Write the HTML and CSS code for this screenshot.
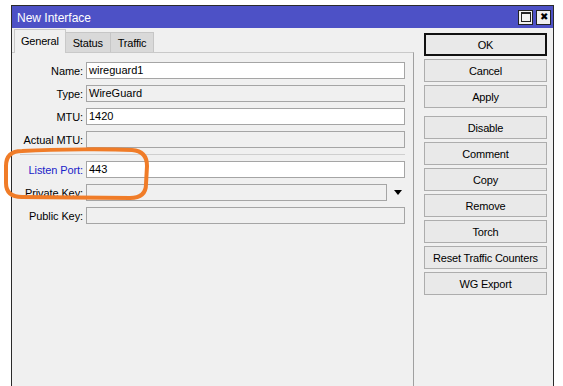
FILE: index.html
```html
<!DOCTYPE html>
<html lang="en">
<head>
  <meta charset="UTF-8">
  <title>New Interface</title>
  <link rel="stylesheet" href="styles.css">
</head>
<body>
  <div class="window">
    <div class="titlebar">
      <span class="title">New Interface</span>
      <span class="title-btn max"><span class="max-icon"></span></span>
      <span class="title-btn close">&#x2716;</span>
    </div>

    <div class="main">
      <div class="left">
        <div class="tabs">
          <div class="tab active">General</div>
          <div class="tab">Status</div>
          <div class="tab">Traffic</div>
        </div>

        <div class="panel">
          <div class="form">
            <label>Name:</label>
            <div class="field">wireguard1</div>

            <label>Type:</label>
            <div class="field disabled">WireGuard</div>

            <label>MTU:</label>
            <div class="field">1420</div>

            <label>Actual MTU:</label>
            <div class="field disabled"></div>

            <div class="separator"></div>

            <label class="blue">Listen Port:</label>
            <div class="field">443</div>

            <label>Private Key:</label>
            <div class="field-row">
              <div class="field disabled"></div>
              <span class="arrow"></span>
            </div>

            <label>Public Key:</label>
            <div class="field disabled"></div>
          </div>
        </div>
      </div>

      <div class="buttons">
        <button class="default">OK</button>
        <button>Cancel</button>
        <button class="spaced">Apply</button>
        <button>Disable</button>
        <button>Comment</button>
        <button>Copy</button>
        <button>Remove</button>
        <button>Torch</button>
        <button>Reset Traffic Counters</button>
        <button>WG Export</button>
      </div>
    </div>
  </div>

  <!-- marker drawn over the screenshot -->
  <svg class="marker" width="563" height="386" viewBox="0 0 563 386">
    <path d="M 22 151 C 60 149, 110 149, 132 150 Q 147 151, 147 166 L 146 184 Q 146 198, 130 198 L 22 197 Q 6 197, 6 183 L 6 166 Q 6 151, 22 151 Z"
          fill="none" stroke="#f07c28" stroke-width="4" />
  </svg>
</body>
</html>
```

FILE: styles.css
```css
body {
  margin: 0;
  height: 386px;
  background-color: white;
  font-family: 'Liberation Sans', Arial, sans-serif;
  font-size: 11px;
  color: black;
  overflow: hidden;
}

.window {
  margin: 5px 0 0 11px;
  width: 543px;
  height: 381px;
  box-sizing: border-box;
  border: 1px solid #2b2b2b;
  border-bottom: none;
  background-color: #f0f0f0;
  display: flex;
  flex-direction: column;
}

.titlebar {
  height: 22px;
  flex-shrink: 0;
  background-color: #4d51c6;
  display: flex;
  align-items: center;
  padding: 0 2px 0 5px;
}

.title {
  color: white;
  font-size: 12px;
  flex: 1;
  padding-top: 2px;
}

.title-btn {
  width: 13px;
  height: 13px;
  border: 1px solid #222;
  background-color: #f0f0f0;
  margin-left: 3px;
  display: flex;
  align-items: center;
  justify-content: center;
  font-size: 10px;
  line-height: 1;
}

.max-icon {
  width: 8px;
  height: 7px;
  border: 1px solid #222;
  border-top-width: 2px;
}

.main {
  display: flex;
  flex: 1;
}

.left {
  width: 402px;
  display: flex;
  flex-direction: column;
}

.tabs {
  height: 24px;
  display: flex;
  align-items: flex-end;
  padding-left: 2px;
}

.tab {
  height: 19px;
  padding: 0 7px;
  display: flex;
  align-items: center;
  background-color: #d9d9d9;
  border: 1px solid #c6c6c6;
  border-bottom: none;
  letter-spacing: -0.2px;
}

.tab + .tab {
  border-left: none;
}

.tab.active {
  background-color: #f0f0f0;
  border-color: #c9c9c9;
  margin-bottom: -1px;
  position: relative;
  padding: 0 6px 2px;
  box-sizing: border-box;
  height: 24px;
}

.panel {
  flex: 1;
  border-top: 1px solid #c9c9c9;
  border-right: 1px solid #a0a0a0;
  padding: 9px 8px 0 0;
}

.form {
  display: grid;
  grid-template-columns: 71px 1fr;
  column-gap: 3px;
  row-gap: 6px;
}

label {
  text-align: right;
  align-self: center;
  letter-spacing: -0.1px;
}

label.blue {
  color: #1a23c8;
}

.field {
  height: 17px;
  box-sizing: border-box;
  border: 1px solid #a5a5a5;
  background-color: white;
  padding: 0 2px;
  line-height: 15px;
}

.field.disabled {
  background-color: #f0f0f0;
}

.field-row {
  display: flex;
  align-items: center;
}

.field-row .field {
  flex: 1;
}

.arrow {
  margin: 0 3px 0 7px;
  width: 0;
  height: 0;
  border-left: 4px solid transparent;
  border-right: 4px solid transparent;
  border-top: 5px solid black;
}

.separator {
  grid-column: 1 / 3;
  margin-left: 8px;
  border-top: 1px solid #cfcfcf;
}

.buttons {
  margin-left: 10px;
  padding-top: 5px;
  display: flex;
  flex-direction: column;
  gap: 3px;
}

button {
  width: 123px;
  height: 23px;
  font-family: 'Liberation Sans', Arial, sans-serif;
  font-size: 11px;
  letter-spacing: -0.2px;
  color: black;
  background-color: #e9e9e9;
  border: 1px solid #adadad;
  padding: 0;
}

button.default {
  border: 2px solid #111;
}

button.spaced {
  margin-bottom: 5px;
}

.marker {
  position: absolute;
  left: 0;
  top: 0;
  pointer-events: none;
}
```
